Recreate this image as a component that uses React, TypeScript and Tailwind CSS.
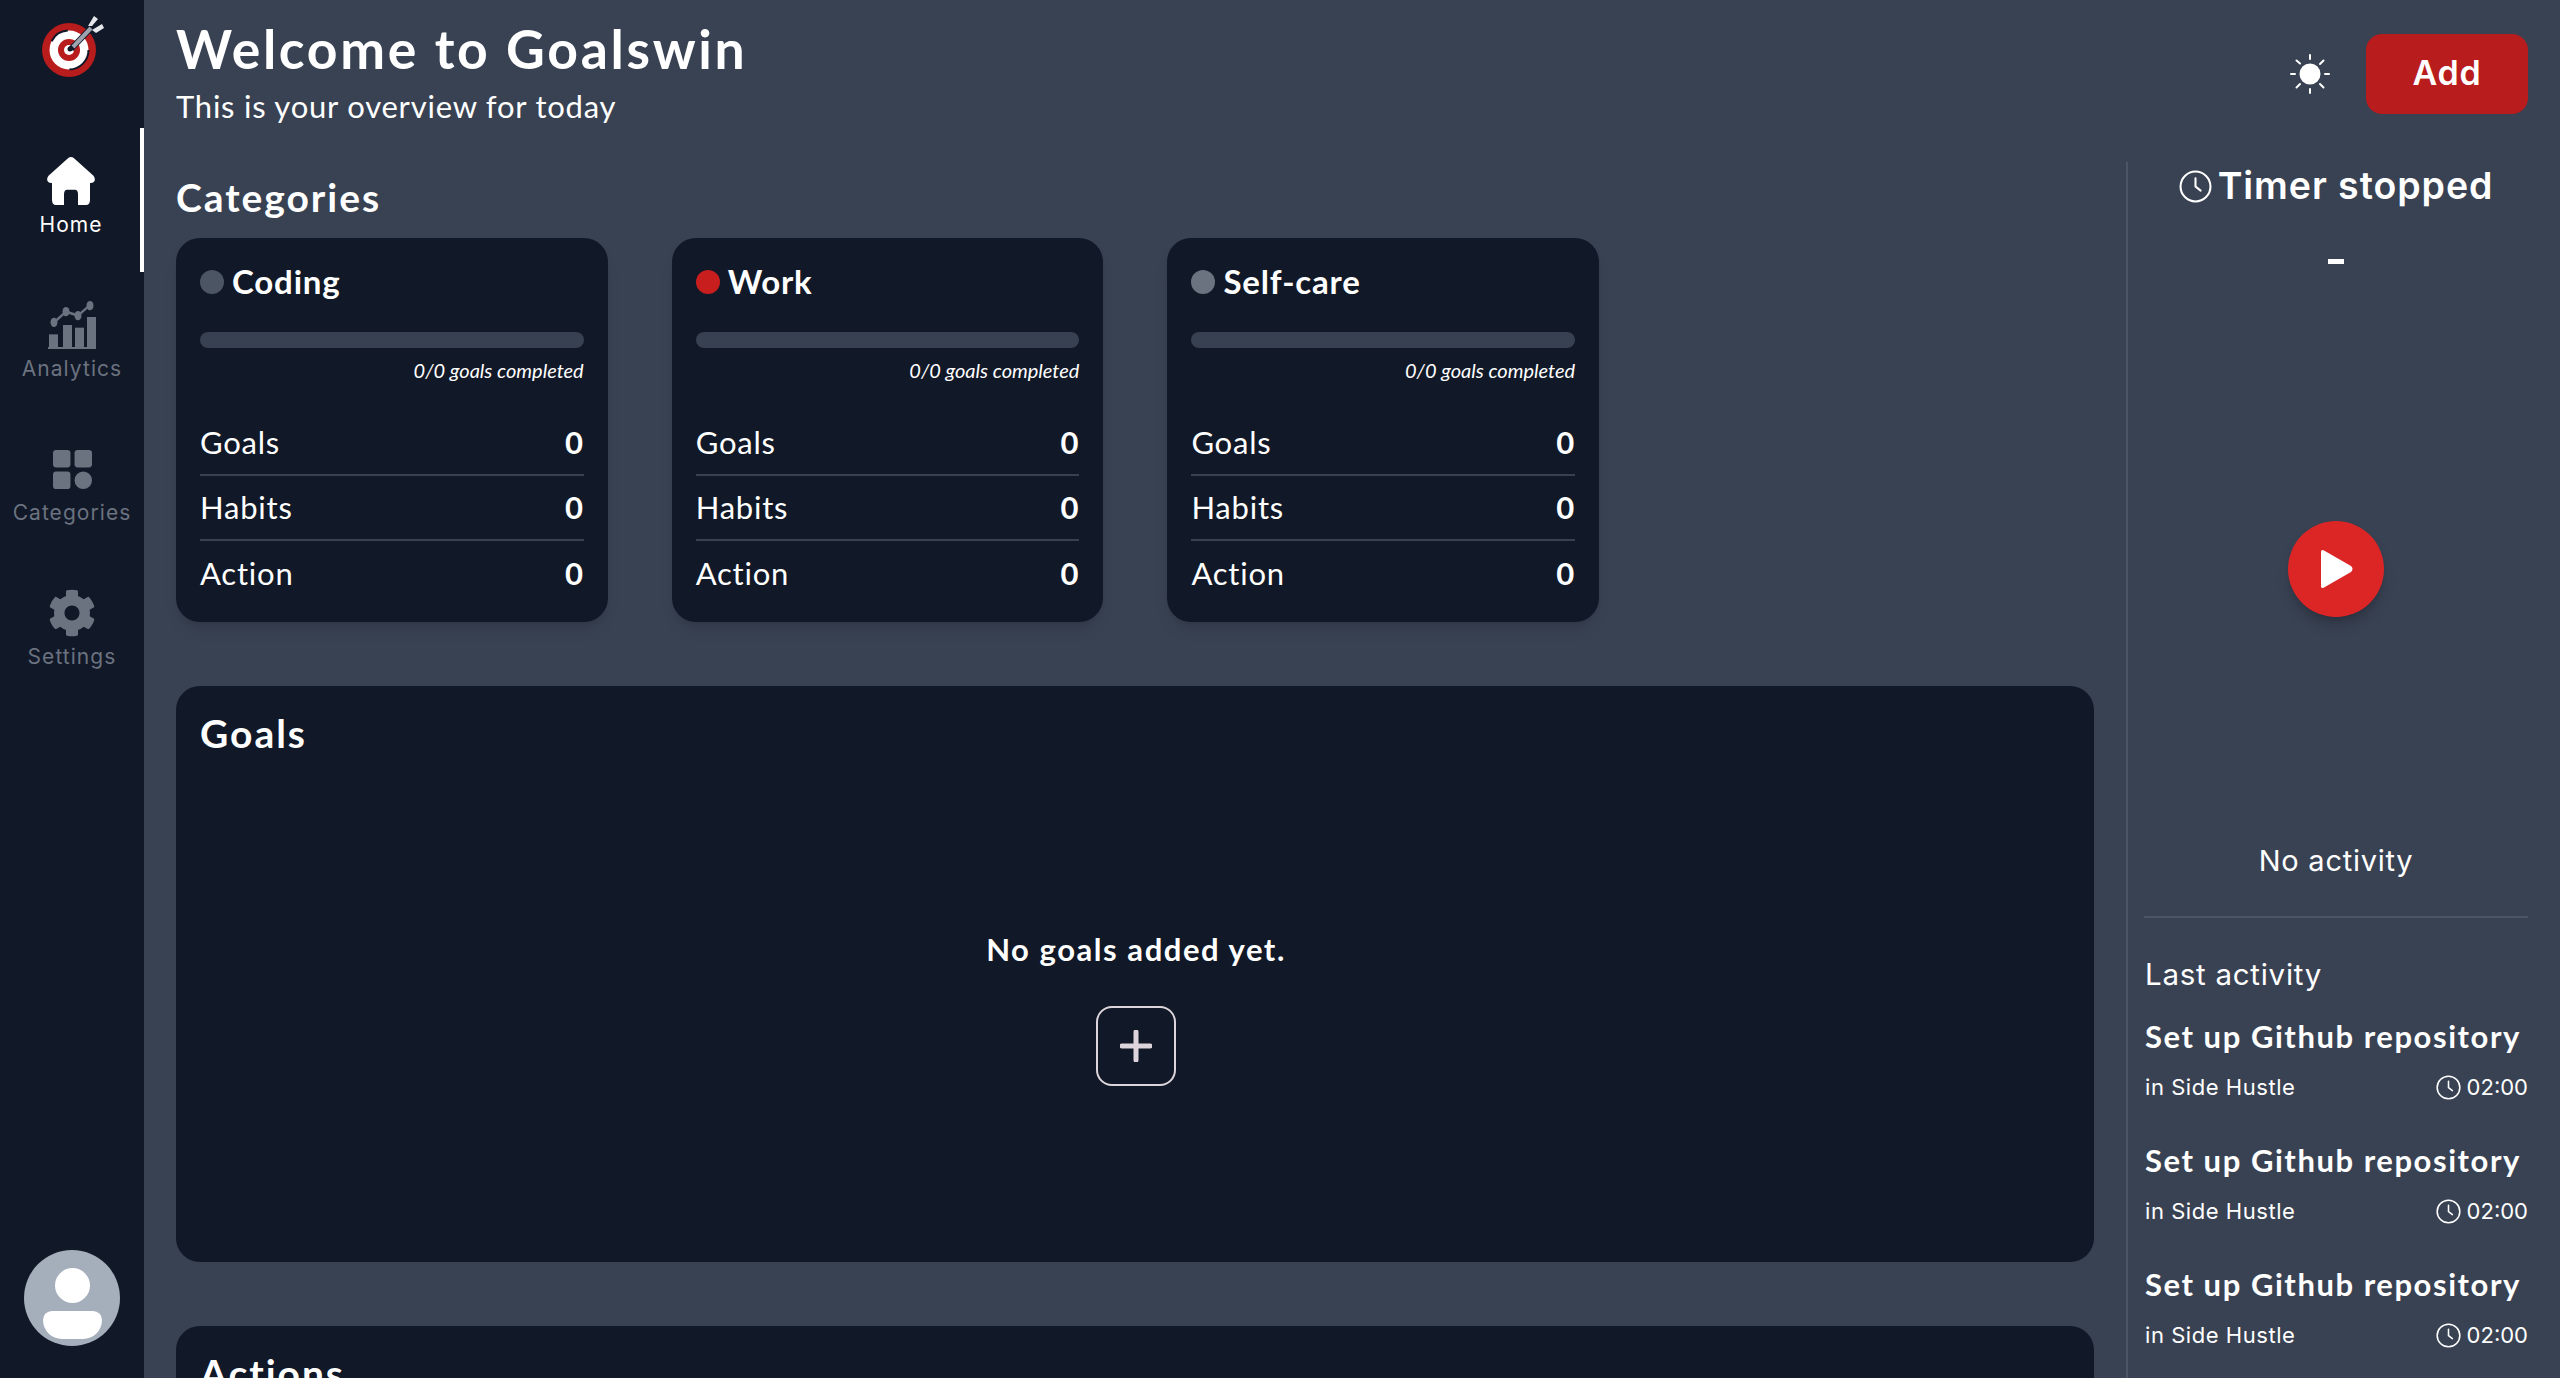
import React from "react";
import { FaCog } from "react-icons/fa";

const body = "font-['Lato','Open_Sans',sans-serif]";
const ui = "font-['Inter',sans-serif]";

const Logo = () => (
  <svg width="64" height="64" viewBox="0 0 64 64">
    <circle cx="29" cy="36" r="27" fill="#b91c1c" />
    <circle cx="29" cy="36" r="19.5" fill="#fff" />
    <circle cx="29" cy="36" r="19.5" fill="none" stroke="#111827" strokeWidth="2" strokeDasharray="30 40 20 40" />
    <circle cx="29" cy="36" r="11" fill="#b91c1c" />
    <circle cx="29" cy="36" r="5" fill="#fff" />
    <circle cx="30" cy="35" r="2.500" fill="#111827" />
    <path d="M31 35 L52 13" stroke="#111827" strokeWidth="6" />
    <path d="M33 33 L51 14" stroke="#9ca3af" strokeWidth="4" />
    <path d="M48 12 L54 2 L58 5 L52 12Z" fill="#e5e7eb" />
    <path d="M52 16 L62 10 L64 14 L56 19Z" fill="#e5e7eb" />
  </svg>
);

const HomeIcon = () => (
  <svg width="48" height="48" viewBox="0 0 48 36" preserveAspectRatio="none" fill="#fff">
    <path d="M24 0 Q25.500 0 27 1 L46.500 14 Q48.500 16 47.500 18 Q46.500 19.500 44 19.500 L43 19.500 L43 32 Q43 36 39 36 L31 36 L31 28 Q31 24.500 28 24.500 L20 24.500 Q17 24.500 17 28 L17 36 L9 36 Q5 36 5 32 L5 19.500 L4 19.500 Q1.500 19.500 0.500 18 Q-0.500 16 1.500 14 L21 1 Q22.500 0 24 0Z" />
  </svg>
);

const AnalyticsIcon = () => (
  <svg width="48" height="48" viewBox="0 0 48 36" preserveAspectRatio="none" fill="#6b7280">
    <rect x="1" y="25" width="9" height="10" />
    <rect x="15" y="18" width="9" height="17" />
    <rect x="27" y="20" width="9" height="15" />
    <rect x="39" y="12" width="9" height="23" />
    <rect x="0" y="34.500" width="48" height="1.500" />
    <path d="M6 16 L18 8 L30 11 L42 3" stroke="#6b7280" strokeWidth="2" fill="none" />
    <circle cx="6" cy="16" r="3.500" />
    <circle cx="18" cy="8" r="3.500" />
    <circle cx="30" cy="11" r="3.500" />
    <circle cx="42" cy="3.500" r="3.500" />
  </svg>
);

const CategoriesIcon = () => (
  <svg width="39" height="39" viewBox="0 0 38 38" fill="#6b7280">
    <rect x="0" y="0" width="17" height="17" rx="3" />
    <rect x="21" y="0" width="17" height="17" rx="3" />
    <rect x="0" y="21" width="17" height="17" rx="3" />
    <circle cx="29.500" cy="29.500" r="8.500" />
  </svg>
);

const ClockIcon = ({ size }: { size: number }) => (
  <svg width={size} height={size} viewBox="0 0 32 32" fill="none" stroke="#fff" strokeWidth="2" strokeLinecap="round">
    <circle cx="16" cy="16" r="14.500" />
    <path d="M16 8 V16 L21 20" />
  </svg>
);

const SunIcon = () => (
  <svg width="40" height="40" viewBox="0 0 40 40" fill="#fff" stroke="#fff" strokeWidth="2" strokeLinecap="round">
    <circle cx="20" cy="20" r="10.500" stroke="none" />
    <path d="M20 1 V5 M20 35 V39 M1 20 H5 M35 20 H39 M6.500 6.500 L10 9.500 M30 30 L33.500 33.500 M33.500 6.500 L30 10 M10 30 L6.500 33.500" />
  </svg>
);

const navItems = [
  { label: "Home", icon: <HomeIcon />, active: true },
  { label: "Analytics", icon: <AnalyticsIcon />, active: false },
  { label: "Categories", icon: <CategoriesIcon />, active: false },
  { label: "Settings", icon: <FaCog className="w-12 h-12 text-[#6b7280]" />, active: false },
];

const Sidebar = () => (
  <aside className="w-36 h-full shrink-0 bg-[#111827] flex flex-col items-center">
    <div className="h-32 w-full flex items-start justify-center pt-3.5">
      <Logo />
    </div>
    {navItems.map((item) => (
      <div
        key={item.label}
        className={`relative w-full h-36 flex flex-col items-center pt-[29px] ${ui} text-[21px] tracking-wider ${
          item.active ? "text-white pr-0.5" : "text-[#6b7280]"
        }`}
      >
        <div className="h-12 flex items-center justify-center">{item.icon}</div>
        <span className="leading-7 mt-1.5">{item.label}</span>
        {item.active && <div className="absolute right-0 top-0 w-1 h-full bg-white" />}
      </div>
    ))}
    <div className="mt-auto mb-8 w-24 h-24 rounded-full bg-[#a5aebb] overflow-hidden flex flex-col items-center">
      <div className="w-[35px] h-[35px] rounded-full bg-white mt-[18px]" />
      <div className="w-[59px] h-7 bg-white mt-2 rounded-t-[14px] rounded-b-[30px]" />
    </div>
  </aside>
);

const CategoryCard = ({ name, dot }: { name: string; dot: string }) => (
  <div className={`w-[431.700px] h-96 rounded-3xl bg-[#111827] shadow-lg shadow-black/10 px-6 pt-[26px] ${body} text-white`}>
    <div className="flex items-center gap-2 h-9">
      <div className={`w-6 h-6 rounded-full ${dot}`} />
      <span className="text-[33px] font-bold tracking-wide">{name}</span>
    </div>
    <div className="h-4 rounded-lg bg-[#374151] mt-[32px]" />
    <div className="text-right text-xl italic leading-7 mt-2">0/0 goals completed</div>
    <div className="mt-[27px]">
      {["Goals", "Habits", "Action"].map((row, i) => (
        <div key={row} className={`flex justify-between items-center h-[65px] text-[31px] tracking-wide ${i < 2 ? "border-b-2 border-[#374151]" : ""}`}>
          <span>{row}</span>
          <span className="font-bold">0</span>
        </div>
      ))}
    </div>
  </div>
);

const ActivityRow = () => (
  <div className="h-[124px] text-white">
    <div className={`${body} text-[31px] font-bold tracking-wider leading-10`}>Set up Github repository</div>
    <div className={`${ui} flex justify-between items-center text-[22px] mt-[15px]`}>
      <span className="tracking-wide">in Side Hustle</span>
      <span className="flex items-center gap-1.5">
        <ClockIcon size={25} />
        02:00
      </span>
    </div>
  </div>
);

export default function App() {
  return (
    <div className="w-full h-screen flex overflow-hidden bg-[#394253] text-white">
      <Sidebar />
      <main className="flex-1 min-w-0 flex flex-col">
        <header className="h-[162px] shrink-0 flex justify-between pl-8 pr-8">
          <div className="pt-4">
            <h1 className={`${body} text-[53.500px] leading-[64px] font-bold tracking-wider`}>Welcome to Goalswin</h1>
            <p className={`${body} text-[31px] leading-10 tracking-wide mt-[6px]`}>This is your overview for today</p>
          </div>
          <div className="flex items-start gap-[36px] pt-[34px]">
            <div className="mt-5"><SunIcon /></div>
            <button className={`w-[162px] h-20 rounded-2xl bg-[#b91c1c] ${ui} text-[34px] font-semibold tracking-wide pb-1`}>Add</button>
          </div>
        </header>
        <div className="flex-1 min-h-0 flex">
          <div className="w-[1982px] shrink-0 pl-8 pr-8">
            <h2 className={`${body} text-[39px] leading-[46px] font-bold tracking-wider mt-3`}>Categories</h2>
            <div className="flex gap-16 mt-[18px]">
              <CategoryCard name="Coding" dot="bg-[#4b5563]" />
              <CategoryCard name="Work" dot="bg-[#c81e1e]" />
              <CategoryCard name="Self-care" dot="bg-[#6b7280]" />
            </div>
            <section className={`mt-16 h-[576px] rounded-3xl bg-[#111827] px-6 pt-6 ${body}`}>
              <h2 className="text-[39px] leading-[46px] font-bold tracking-wider">Goals</h2>
              <div className="flex flex-col items-center mt-[173px] pl-0.5">
                <p className="text-[31px] leading-10 font-bold tracking-wider">No goals added yet.</p>
                <button className="w-20 h-20 mt-[37px] rounded-2xl border-2 border-[#ddd5db] flex items-center justify-center">
                  <svg width="32" height="32" viewBox="0 0 32 32" stroke="#ddd5db" strokeWidth="5" strokeLinecap="round">
                    <path d="M16 2 V30 M2 16 H30" />
                  </svg>
                </button>
              </div>
            </section>
            <section className={`mt-16 h-[400px] rounded-3xl bg-[#111827] px-6 pt-6 ${body}`}>
              <h2 className="text-[39px] leading-[46px] font-bold tracking-wider">Actions</h2>
            </section>
          </div>
          <aside className="flex-1 min-w-0 border-l-2 border-[#4b5563] pl-4 pr-8">
            <div className={`${ui} flex items-center justify-center gap-1.5 h-12 text-[37.500px] font-semibold tracking-wide`}>
              <ClockIcon size={33} />
              <span>Timer stopped</span>
            </div>
            <div className="w-4 h-[5px] bg-white mx-auto mt-[49px]" />
            <div className="w-24 h-24 rounded-full bg-[#dc2626] shadow-lg shadow-black/20 mx-auto mt-[257px] flex items-center justify-center">
              <svg width="36" height="40" viewBox="0 0 36 40" fill="#fff">
                <path d="M3 3 Q3 0 6 1.500 L33 17 Q36 20 33 23 L6 38.500 Q3 40 3 37Z" />
              </svg>
            </div>
            <div className={`${ui} text-center text-[29px] tracking-wide leading-10 mt-[224px]`}>No activity</div>
            <div className="h-0.5 bg-[#4b5563] mt-[35px]" />
            <div className={`${ui} text-[29.500px] tracking-wide leading-10 mt-[36px] pl-px`}>Last activity</div>
            <div className="mt-[22px] pl-px">
              <ActivityRow />
              <ActivityRow />
              <ActivityRow />
            </div>
          </aside>
        </div>
      </main>
    </div>
  );
}
